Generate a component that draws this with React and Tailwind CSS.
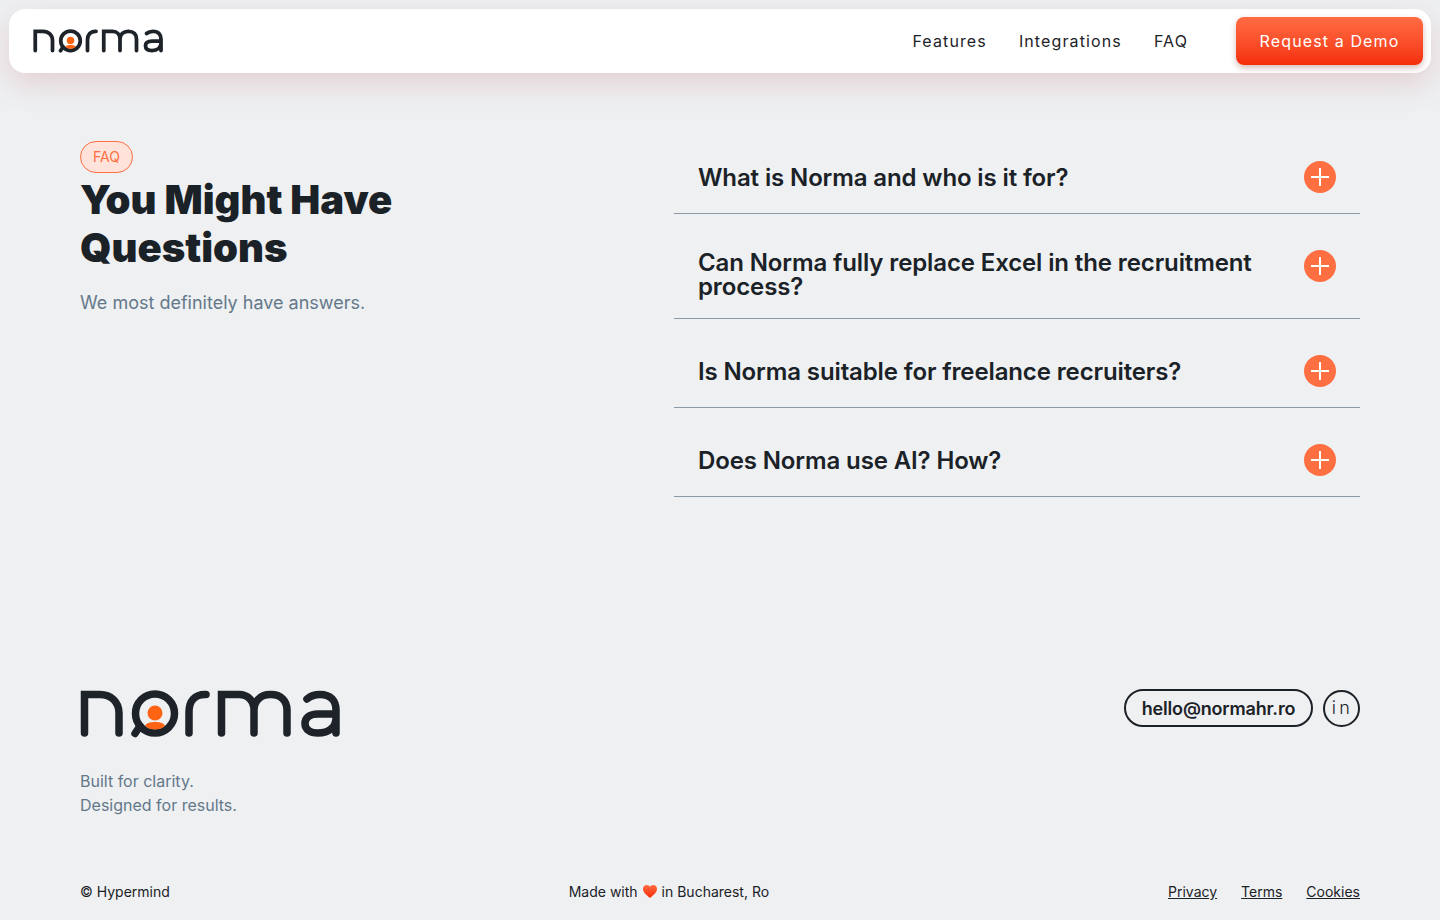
const faqs = [
  "What is Norma and who is it for?",
  "Can Norma fully replace Excel in the recruitment process?",
  "Is Norma suitable for freelance recruiters?",
  "Does Norma use AI? How?",
];

const Logo = ({ className }) => (
  <svg viewBox="0 0 262 48" fill="none" className={className}>
    <g stroke="#1d2329" strokeWidth="7.500" strokeLinecap="round">
      {/* n */}
      <path d="M4.500 43V4.500H20C31 4.500 39 12 39 23V43" />
      {/* o */}
      <circle cx="75" cy="23.500" r="19.500" />
      <path d="M60 36L55 43.500" />
      {/* r */}
      <path d="M109 43V22C109 11 115 4.500 125 4.500H126" />
      {/* m */}
      <path d="M141.500 43V4.500H159C168 4.500 174 11 174 20V43M174 20C174 11 181 4.500 190 4.500H191C201 4.500 207 11 207 20V43" />
      {/* a */}
      <path d="M227 9C231 5.500 236 4.500 240 4.500C251 4.500 256 11 256 20V43M256 24H238C229 24 225 28 225 33.500C225 39.500 230 43 238 43C249 43 256 37 256 28" />
    </g>
    <circle cx="75" cy="23" r="7.500" fill="#ff6414" />
    <path d="M65 35.500C67 32.500 71 32 75 32C79 32 83 32.500 85 35.500C82 38.500 79 39.500 75 39.500C71 39.500 68 38.500 65 35.500Z" fill="#ff6414" />
  </svg>
);

const PlusIcon = () => (
  <span className="flex size-8 shrink-0 items-center justify-center rounded-full bg-[#ff6f42]">
    <svg viewBox="0 0 20 20" className="size-5" stroke="white" strokeWidth="2">
      <path d="M1 10H19M10 1V19" />
    </svg>
  </span>
);

const Heart = () => (
  <svg viewBox="0 0 24 22" className="mx-[5px] inline-block h-[13px] w-[14px] align-[-1px]">
    <defs>
      <linearGradient id="heart" x1="0" y1="0" x2="0" y2="1">
        <stop offset="0" stopColor="#ff6b42" />
        <stop offset="1" stopColor="#f52c08" />
      </linearGradient>
    </defs>
    <path d="M12 22C5 16 0 12 0 6.500C0 2.500 3 0 6.500 0C9 0 11 1.200 12 3.200C13 1.200 15 0 17.500 0C21 0 24 2.500 24 6.500C24 12 19 16 12 22Z" fill="url(#heart)" />
  </svg>
);

export default function App() {
  return (
    <div className="min-h-[920px] overflow-hidden bg-[#eef0f2] font-['Inter',sans-serif] text-[#1b2227]">
      {/* nav */}
      <div className="px-[9px] pt-[9px]">
        <nav className="flex h-16 items-center justify-between rounded-2xl bg-white pl-6 pr-2 shadow-[0_10px_30px_rgba(190,90,90,0.22)]">
          <Logo className="h-[24px] w-[131px]" />
          <div className="flex items-center">
            <div className="flex gap-8 text-base tracking-[0.07em] text-[#1d2329]">
              <a>Features</a>
              <a>Integrations</a>
              <a>FAQ</a>
            </div>
            <button className="ml-12 h-12 w-[187px] rounded-lg bg-linear-to-b from-[#ff6b42] to-[#f52c08] text-base tracking-[0.07em] text-white shadow-[0_3px_6px_rgba(120,40,20,0.3)]">
              Request a Demo
            </button>
          </div>
        </nav>
      </div>

      {/* faq */}
      <section className="flex justify-between px-20 pt-[68px]">
        <div className="w-[400px]">
          <span className="flex h-8 w-[53px] items-center justify-center rounded-full border border-[#ff6f42] bg-[#ffe3da] text-sm text-[#ff6f42]">
            FAQ
          </span>
          <h2 className="mt-[3px] text-[40px] leading-[48px] font-black text-[#1b2227]">
            You Might Have Questions
          </h2>
          <p className="mt-[17px] text-lg leading-7 text-[#64788a]">We most definitely have answers.</p>
        </div>
        <div className="w-[686px] space-y-4">
          {faqs.map((q) => (
            <div key={q} className="flex items-start justify-between gap-6 border-b border-[#8a9aa8] px-6 py-5">
              <h3 className="flex min-h-8 translate-y-px items-center text-2xl leading-6 font-semibold tracking-[-0.005em] text-[#1b2227]">
                {q}
              </h3>
              <PlusIcon />
            </div>
          ))}
        </div>
      </section>

      {/* footer */}
      <footer className="px-20 pt-[193px]">
        <div className="flex items-start justify-between">
          <div>
            <Logo className="h-[48px] w-[262px]" />
            <p className="mt-[31px] text-base leading-6 text-[#64788a]">
              Built for clarity.
              <br />
              Designed for results.
            </p>
          </div>
          <div className="-mt-px flex items-center gap-[10px]">
            <a className="flex h-[38px] w-[189px] items-center justify-center rounded-full border-2 border-[#1b2227] pt-px text-lg font-semibold tracking-[-0.01em]">
              hello@normahr.ro
            </a>
            <a className="flex size-[37px] items-center justify-center rounded-full border-2 border-[#1b2227] pl-[2px] text-lg font-light tracking-[0.18em]">
              in
            </a>
          </div>
        </div>
        <div className="mt-[65px] flex items-center justify-between text-sm leading-5">
          <span>© Hypermind</span>
          <span>
            Made with
            <Heart />
            in Bucharest, Ro
          </span>
          <div className="flex gap-6">
            <a className="underline">Privacy</a>
            <a className="underline">Terms</a>
            <a className="underline">Cookies</a>
          </div>
        </div>
      </footer>
    </div>
  );
}
